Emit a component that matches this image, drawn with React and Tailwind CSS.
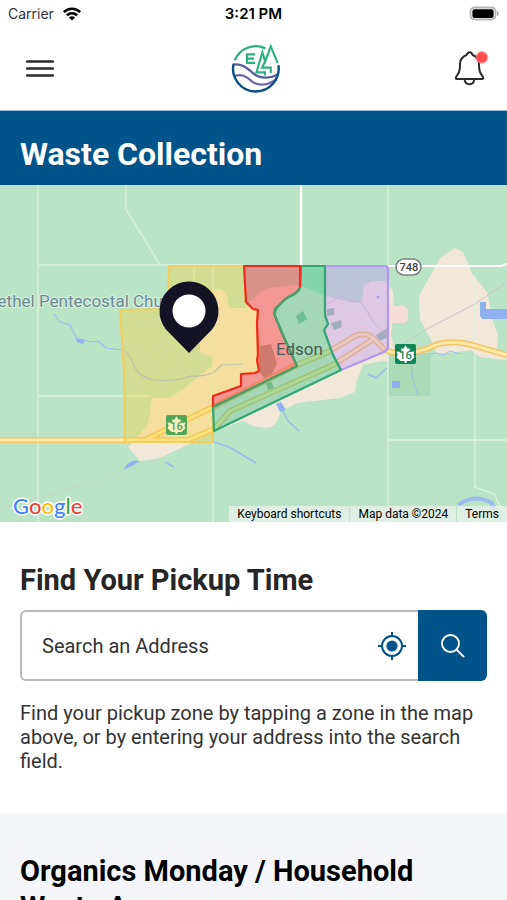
import { useState } from 'react';

function StatusBar() {
  return (
    <div className="grid grid-cols-3 items-center h-7 pl-2 pr-2 font-['Inter',sans-serif] text-black">
      <div className="flex items-center gap-2 text-sm text-[#333333]">
        <span>Carrier</span>
        <svg className="w-5 h-4" viewBox="0 0 20 16" fill="none" stroke="#000" strokeWidth="2.6">
          <path d="M1.8 6.2C6.4 1.6 13.6 1.6 18.2 6.2" />
          <path d="M4.9 9.3C7.8 6.5 12.2 6.5 15.1 9.3" />
          <path d="M10 14.6L6.9 11.5C8.6 9.9 11.4 9.9 13.1 11.5Z" fill="#000" stroke="none" />
        </svg>
      </div>
      <div className="text-center text-[15px] leading-5 font-semibold">3:21 PM</div>
      <svg className="justify-self-end w-8 h-4" viewBox="0 0 32 16">
        <rect x="3.5" y="1.5" width="25" height="12" rx="4" fill="#fff" stroke="#b5b5b5" strokeWidth="1.8" />
        <rect x="5.4" y="3.2" width="21.2" height="8.8" rx="2" fill="#000" />
        <path d="M30 5C32.4 6 32.4 9 30 10Z" fill="#a5a5a5" />
      </svg>
    </div>
  );
}

function Logo() {
  return (
    <svg className="w-12 h-12" viewBox="0 0 48 48" fill="none" overflow="visible">
      <path d="M2.8 15.4A22.6 22.6 0 0 1 33.4 3.4" stroke="#2bb07f" strokeWidth="2.3" />
      <path d="M23 9.4H15V17.8H23M15 13.6H22" stroke="#2bb07f" strokeWidth="2.3" />
      <path d="M33 30.6V27.4H24.4L30.4 7.4L33.2 16.4L38.8 1.4L45.6 17.8" stroke="#2bb07f" strokeWidth="2.1" />
      <path d="M33.2 16L30.2 22.6H38.8V28" stroke="#2bb07f" strokeWidth="2.1" />
      <path d="M1.2 19.6C9 18 15 22.6 21 28.2S38 34 46 29.6" stroke="#575f9b" strokeWidth="2.3" />
      <path d="M2.6 31C10 28.4 15 32 20 36.4S36 41.6 44.6 33.6" stroke="#6d6aa5" strokeWidth="2.2" />
      <path d="M1.6 18.8A22.8 22.8 0 1 0 46.4 20.2" stroke="#0b4f80" strokeWidth="2.4" />
    </svg>
  );
}

function Header() {
  return (
    <header className="flex items-center justify-between h-[83px] px-5 border-b border-[#9db8cc]">
      <button type="button" aria-label="Menu" className="flex items-center justify-center w-10 h-10">
        <svg className="w-7 h-5" viewBox="0 0 28 20" stroke="#2b2b2b" strokeWidth="2.5" strokeLinecap="round">
          <path d="M1 2.5H27M1 9.5H27M1 16.5H27" />
        </svg>
      </button>
      <a href="#home" aria-label="Home">
        <Logo />
      </a>
      <button type="button" aria-label="Notifications" className="flex items-center justify-center w-9 h-10">
        <svg className="w-9 h-9" viewBox="0 0 36 36" overflow="visible" fill="none" stroke="#2b2b2b" strokeWidth="2" strokeLinejoin="round">
          <path d="M13.6 28.2C13.8 31.4 15.8 33.2 18.6 33.2S23 31.4 23.2 28.2" />
          <path d="M18.6 1.2C17 1.2 16.2 2.2 15.6 4C11.2 5.6 9 9.2 9 13.4C9 20 8 21.8 5.2 25.8C4.4 27.4 4.8 28 6 28H31C32.2 28 32.6 27.4 31.8 25.8C29 21.8 28 20 28 13.4C28 9.2 26 5.6 21.6 4C21 2.2 20.2 1.2 18.6 1.2Z" />
          <circle cx="30.8" cy="6.4" r="5.6" fill="#ff4b4d" stroke="#ff7b7c" strokeOpacity="0.5" />
        </svg>
      </button>
    </header>
  );
}

function Shield({ x, y, color, leaf }) {
  return (
    <g transform={`translate(${x} ${y})`}>
      <rect width="21" height="20" rx="2" fill={color} />
      <path
        d="M10.5 1.2L12.8 5L14.8 4L14.4 8L19.6 7.4L18.4 10.4L19.4 13.6L15.4 17H11.6V18.8H9.4V17H5.6L1.6 13.6L2.6 10.4L1.4 7.4L6.6 8L6.2 4L8.2 5Z"
        fill={leaf}
      />
      <text x="10.5" y="15.4" textAnchor="middle" fontSize="11" fontWeight="500" fill={color}>16</text>
    </g>
  );
}

const highway =
  'M0 440H188L214 429L230 411L333 365L372 340M145 440L213 407L297 365L328 352L350 339Q363 330 373 338L384 349Q392 354 404 353Q420 353 438 344Q455 340 472 345L507 355';

function ZoneMap() {
  return (
    <svg
      className="block w-full h-[337px] font-[Roboto,sans-serif]"
      viewBox="0 185 507 337"
      preserveAspectRatio="xMidYMid slice"
      role="img"
      aria-label="Map of pickup zones in Edson"
    >
      <rect x="0" y="185" width="507" height="337" fill="#bbe3c5" />

      {/* built-up land */}
      <g fill="#f1e8d8">
        <path d="M213 289L221 289L227 295L229 308L246 308Q258 288 276 287L300 285L325 296L350 302L362 302L364 286L372 281L385 281L393 291L394 306L391 335L395 350L387 361L377 362L363 365L357 380L355 392L340 398L297 403L280 412Q278 427 266 428L253 426L243 421L214 431L187 445L160 458L140 461L128 447L136 439L148 424L152 398L168 398L182 390L212 366V357L200 352V337L208 334Z" />
        <path d="M455 248L463 252L473 275L487 292L492 318L498 335L497 352L475 350L437 354L430 338L420 320L419 296L440 258Z" />
        <path d="M464 345L507 352V360L480 357Z" />
      </g>
      <path d="M388 306H404L408 310V320L405 323H388Z" fill="#f6ddd9" />
      <rect x="388" y="353" width="43" height="43" fill="#aadbb7" />
      <path d="M260 346L271 344L277 364L270 378L274 388L268 390L264 378L258 370Z" fill="#a2b38a" />
      <path d="M296 316L303 311L307 319L299 324ZM327 309L334 308L334 315L327 316ZM331 323L341 320L342 327L334 330ZM376 335L387 328V338L379 341Z" fill="#91be9f" />

      {/* water */}
      <g fill="none" stroke="#9cbcf0" strokeWidth="1.6" strokeLinejoin="round">
        <path d="M54 314L60 322L70 325L77 339L92 342L98 341L106 348L121 350Q128 351 133 363Q138 378 155 380Q178 382 190 376Q205 377 214 372L222 365L243 364" strokeWidth="1.2" />
        <path d="M281 407L288 421L299 431M214 442L229 447L256 463M368 374L376 378L387 368M125 469Q131 459 139 462M165 462L174 467" />
        <path d="M412 357Q409 374 418 395M430 354L437 353L444 355L450 351L460 354" strokeWidth="1" />
        <path d="M458 505Q474 493 492 503L494 510" strokeWidth="4" />
      </g>
      <g fill="#8fb1ef">
        <path d="M480 302H486V309H507V319H482L480 316Z" />
        <path d="M276 404L281 402L286 410L280 412Z" />
        <path d="M76 338L85 340L83 344L77 342Z" />
        <rect x="392" y="381" width="8" height="7" />
        <circle cx="378" cy="297" r="1.6" />
        <path d="M123 470L130 462L139 461L134 465Z" />
      </g>
      <path d="M507 282L475 304L425 330L393 350M325 305L342 296Q352 303 361 302L375 324L387 335" fill="none" stroke="#c8c3cf" strokeWidth="1" />
      <path d="M0 509L125 473" stroke="#c6d6c7" strokeWidth="1" />

      {/* minor roads */}
      <g fill="none" stroke="#dff2df" strokeWidth="1.3">
        <path d="M38 185V522M126 185V209L160 265M38 265H244M38 396H150M194 266V285M213 266V522M388 185V522M388 440H507M475 275V487L494 494L502 510" />
      </g>
      <g fill="none" stroke="#fff">
        <path d="M301 185V266" strokeWidth="2.2" />
        <path d="M300 266H501L507 264" strokeWidth="2" />
      </g>

      {/* highway 16 */}
      <path d={highway} fill="none" stroke="#f2c468" strokeWidth="6" />
      <path d={highway} fill="none" stroke="#fdeaa8" strokeWidth="3" />

      {/* pickup zones */}
      <g strokeWidth="2.2" strokeLinejoin="round">
        <path d="M169 266H244L246 302L253 309L258 310L257 322L258 355L257 360L259 371L255 373L241 374V386L213 396V442H125L124 370L120 310L168 309Z" fill="#fbd038" fillOpacity="0.36" stroke="#f0cf5e" />
        <path d="M325 266H385Q388 266 388 269V347Q388 350 384 352L341 370L333 355L324 330L328 324L325 315Z" fill="#bf93f5" fillOpacity="0.38" stroke="#b497ec" />
        <path d="M301 266H325V315L328 324L324 330L333 355L341 370L214 431L213 407L297 366L282 333L275 316Q273 310 285 299Q299 293 300 288Z" fill="#36bf87" fillOpacity="0.42" stroke="#2fa873" />
        <path d="M244 266H300V287Q299 292 288 297L277 307Q273 310 275 316L282 333L297 366L213 407V396L241 386V374L255 373L259 371L257 360L258 355L257 322L258 310L253 309L246 302Z" fill="#f8444f" fillOpacity="0.5" stroke="none" />
        <path d="M213 407V396L241 386V374L255 373L259 371L257 360L258 355L257 322L258 310L253 309L246 302L244 266H300V287" fill="none" stroke="#f02a1c" />
        <path d="M300 287Q299 292 288 297L277 307Q273 310 275 316L282 333L297 366L213 407" fill="none" stroke="#4d9d68" />
      </g>

      <Shield x={166} y={415} color="#54a457" leaf="#fbf0bd" />
      <Shield x={395} y={344} color="#118556" leaf="#ffffff" />
      <rect x="396" y="259" width="25" height="16" rx="8" fill="#fff" stroke="#7b8583" strokeWidth="1.6" />
      <text x="409" y="271" textAnchor="middle" fontSize="11" fontWeight="500" fill="#444">748</text>
      <text x="276" y="355" fontSize="17" fill="#4b5b56">Edson</text>
      <text x="-13" y="307" fontSize="17" fill="#6d8a92" stroke="#d9efe0" strokeWidth="2" paintOrder="stroke">
        Bethel Pentecostal Church
      </text>

      <path d="M189 353L166 329.500A29.500 29.500 0 1 1 212 329.500Z" fill="#141225" />
      <circle cx="189" cy="311" r="16.500" fill="#fff" />

      <text x="13" y="514" fontSize="22" fontFamily="Lato, sans-serif" fontWeight="500" stroke="#fff" strokeWidth="3" paintOrder="stroke" strokeLinejoin="round">
        <tspan fill="#4285f4">G</tspan>
        <tspan fill="#ea4335">o</tspan>
        <tspan fill="#fbbc05">o</tspan>
        <tspan fill="#4285f4">g</tspan>
        <tspan fill="#34a853">l</tspan>
        <tspan fill="#ea4335">e</tspan>
      </text>
    </svg>
  );
}

function MapSection() {
  return (
    <section className="relative">
      <ZoneMap />
      <div className="absolute bottom-0 right-0 flex gap-px text-xs leading-4 text-black">
        <button type="button" className="bg-[#f0f4f0]/70 px-2">Keyboard shortcuts</button>
        <span className="bg-[#f0f4f0]/70 px-2">Map data ©2024</span>
        <a href="#terms" className="bg-[#f0f4f0]/70 px-2">Terms</a>
      </div>
    </section>
  );
}

function AddressSearch() {
  const [address, setAddress] = useState('');

  const handleSubmit = (e) => {
    e.preventDefault();
  };

  return (
    <section className="px-5 pt-10 pb-10">
      <h2 className="text-[29px] leading-9 font-bold text-[#262626]">Find Your Pickup Time</h2>
      <form onSubmit={handleSubmit} className="flex mt-3 h-[71px]">
        <div className="flex flex-1 min-w-0 items-center border-2 border-r-0 border-[#b9b9b9] rounded-l-md pl-5 pr-2">
          <input
            type="text"
            name="address"
            aria-label="Search an Address"
            placeholder="Search an Address"
            value={address}
            onChange={(e) => setAddress(e.target.value)}
            className="flex-1 min-w-0 h-full text-xl text-[#333333] placeholder:text-[#333333] outline-none"
          />
          <button type="button" aria-label="Use my location" className="p-1">
            <svg className="w-7 h-7" viewBox="0 0 28 28" fill="none" stroke="#00548a" strokeWidth="2">
              <circle cx="14" cy="14" r="10" />
              <circle cx="14" cy="14" r="5.600" fill="#00548a" stroke="none" />
              <path d="M14 0V4M14 24V28M0 14H4M24 14H28" />
            </svg>
          </button>
        </div>
        <button type="submit" aria-label="Search" className="flex items-center justify-center w-[69px] bg-[#00548a] rounded-r-md">
          <svg className="w-6 h-6" viewBox="0 0 24 24" fill="none" stroke="#fff" strokeWidth="1.800" strokeLinecap="round">
            <circle cx="9.500" cy="9.500" r="8.500" />
            <path d="M15.800 15.800L22.600 22.600" />
          </svg>
        </button>
      </form>
      <p className="mt-5 text-xl leading-6 text-[#333333]">
        Find your pickup zone by tapping a zone in the map above, or by entering your address into the search field.
      </p>
    </section>
  );
}

function App() {
  return (
    <div className="min-h-screen bg-white font-[Roboto,sans-serif]">
      <StatusBar />
      <Header />
      <main>
        <div className="bg-[#00548a] px-5 pt-6 pb-3">
          <h1 className="text-[32px] leading-[38px] font-bold text-white">Waste Collection</h1>
        </div>
        <MapSection />
        <AddressSearch />
        <section className="bg-[#f3f5f9] px-5 py-10">
          <h2 className="text-[29px] leading-9 font-bold text-black">Organics Monday / Household Waste A</h2>
        </section>
      </main>
    </div>
  );
}

export default App;
